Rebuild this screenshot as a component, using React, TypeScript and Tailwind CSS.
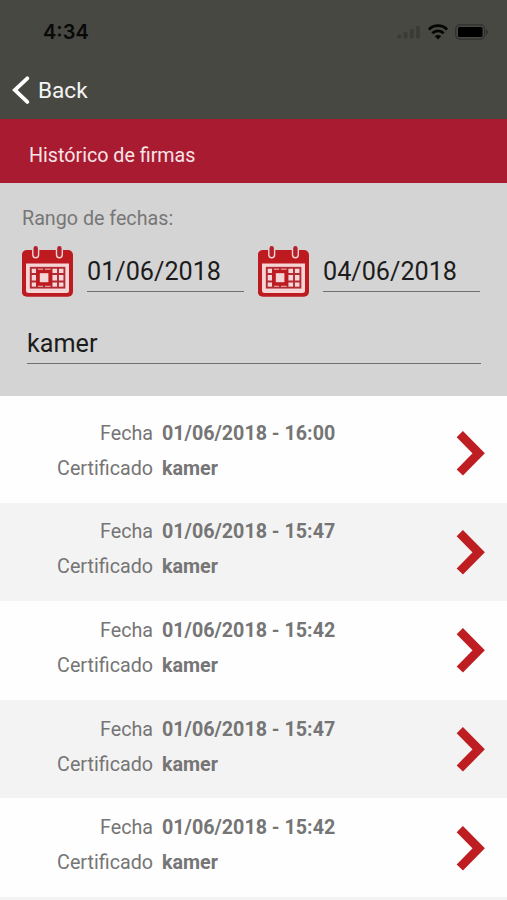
import React from 'react';

interface Signature {
  id: number;
  date: string;
  certificate: string;
}

const signatures: Signature[] = [
  { id: 1, date: '01/06/2018 - 16:00', certificate: 'kamer' },
  { id: 2, date: '01/06/2018 - 15:47', certificate: 'kamer' },
  { id: 3, date: '01/06/2018 - 15:42', certificate: 'kamer' },
  { id: 4, date: '01/06/2018 - 15:47', certificate: 'kamer' },
  { id: 5, date: '01/06/2018 - 15:42', certificate: 'kamer' },
];

// ================= ICONS =================
const SignalIcon = () => (
  <svg width="24" height="16" viewBox="0 0 24 16" fill="#3a3b36">
    <rect x="0.5" y="10.5" width="3.8" height="4" rx="1" />
    <rect x="6.7" y="8" width="3.8" height="6.5" rx="1" />
    <rect x="12.9" y="5" width="3.8" height="9.5" rx="1" />
    <rect x="19" y="2" width="3.8" height="12.5" rx="1" />
  </svg>
);

const WifiIcon = () => (
  <svg width="20" height="16" viewBox="0 0 20 16" fill="none" stroke="#050505" strokeWidth="2.8">
    <path d="M0.9 5.6C6 0.4 14 0.4 19.1 5.6" />
    <path d="M4.3 9.2C7.5 6 12.5 6 15.7 9.2" />
    <path d="M10 15.6L6.8 12.2C8.6 10.5 11.4 10.5 13.2 12.2Z" fill="#050505" stroke="none" />
  </svg>
);

const BatteryIcon = () => (
  <svg width="34" height="16" viewBox="0 0 34 16">
    <rect x="0.7" y="0.9" width="29" height="14.2" rx="4" fill="none" stroke="#2f302c" strokeWidth="1.2" />
    <rect x="3" y="3" width="24.5" height="10" rx="1.5" fill="#000" />
    <path d="M31 5.2C33.4 6 33.4 10 31 10.8Z" fill="#2f302c" />
  </svg>
);

const CalendarIcon = () => (
  <svg width="52" height="52" viewBox="0 0 52 52" className="shrink-0">
    <rect x="-0.2" y="4" width="51.2" height="46.8" rx="5" fill="#be1b20" />
    <path d="M4 17.5H47V44.5Q47 47 44.5 47H6.5Q4 47 4 44.5Z" fill="#f5d5d5" />
    <g fill="none" stroke="#b32a33" strokeWidth="1.9">
      <rect x="8.8" y="21.8" width="33.6" height="19.8" />
      <path d="M15 22V42M29.5 22V42M36 22V42M22 22V25M22 37V42" />
      <path d="M8.6 28H43M8.6 35.5H43" />
      <rect x="16" y="25.4" width="12.2" height="12.6" fill="#f5d5d5" stroke="#be1b20" strokeWidth="3.6" />
    </g>
    <path d="M13.7 2.5V8.8M37.4 2.5V8.8" stroke="#f5d5d5" strokeWidth="7.2" strokeLinecap="round" />
    <path d="M10 -1H17.5V4H10zM33.7 -1H41.2V4H33.7z" fill="#d4d4d4" />
    <path d="M13.7 2.3V8.8M37.4 2.3V8.8" stroke="#b5202a" strokeWidth="4.4" strokeLinecap="round" />
  </svg>
);

const ChevronIcon = () => (
  <svg width="30" height="46" viewBox="0 0 30 46" fill="none" stroke="#be1e22" strokeWidth="8.8">
    <path d="M3.8 4.1L22.7 23.3L3.8 42.5" />
  </svg>
);

// ================= DATE FIELD =================
const DateField = ({ value }: { value: string }) => (
  <div className="flex">
    <CalendarIcon />
    <div className="ml-[13px] h-[46px] w-[157px] border-b border-[#707070] pt-1.5 text-[25.2px] leading-10 text-[#1c1c1c]">
      {value}
    </div>
  </div>
);

// ================= LIST ROW =================
const SignatureRow = ({ item }: { item: Signature }) => (
  <div className="flex h-[98.6px] items-center bg-[#fefefe] pr-[21px] even:bg-[#f3f3f3]">
    <div className="grid grow grid-cols-[153px_1fr] gap-x-[9px] pb-[5px] text-[19.7px] leading-[35px] text-[#757575]">
      <span className="text-right">Fecha</span>
      <span className="font-bold">{item.date}</span>
      <span className="text-right">Certificado</span>
      <span className="font-bold">{item.certificate}</span>
    </div>
    <ChevronIcon />
  </div>
);

const App = () => {
  return (
    <div className="flex h-[900px] w-[507px] flex-col overflow-hidden bg-[#f3f3f3] font-['Roboto',sans-serif]">
      {/* STATUS BAR + NAVIGATION */}
      <header className="h-[119px] shrink-0 bg-[#474842]">
        <div className="flex h-16 items-center justify-between pr-[18px] pl-[43px]">
          <span className="font-['Inter',sans-serif] text-[20px] font-semibold text-[#090909]">4:34</span>
          <div className="flex items-center gap-[7px]">
            <SignalIcon />
            <WifiIcon />
            <BatteryIcon />
          </div>
        </div>
        <button className="flex h-[52px] items-center pl-3 text-[22.6px] text-[#f4f4f4]">
          <svg width="18" height="28" viewBox="0 0 18 28" fill="none" stroke="#fff" strokeWidth="3.8" strokeLinecap="round">
            <path d="M15.3 2.3L2.8 14L15.3 25.9" />
          </svg>
          <span className="ml-2 pt-0.5">Back</span>
        </button>
      </header>

      {/* TITLE */}
      <div className="flex h-[63.5px] shrink-0 items-center bg-[#a91b30] pt-2.5 pl-[29px] text-[19.7px] text-[#f8e4e7]">
        <h1>Histórico de firmas</h1>
      </div>

      {/* FILTERS */}
      <section className="h-[213.5px] shrink-0 bg-[#d4d4d4] px-[22px] pt-[21px]">
        <p className="h-[42px] text-[19.7px] leading-[30px] text-[#777]">Rango de fechas:</p>
        <div className="flex gap-[14px]">
          <DateField value="01/06/2018" />
          <DateField value="04/06/2018" />
        </div>
        <div className="mx-[5px] mt-[26px] h-[40px] w-[454px] border-b border-[#707070] text-[25.2px] leading-[40px] text-[#1c1c1c]">
          kamer
        </div>
      </section>

      {/* LIST */}
      <main className="shrink-0 bg-[#fefefe] pt-2">
        {signatures.map((item) => (
          <SignatureRow key={item.id} item={item} />
        ))}
      </main>
    </div>
  );
};

export default App;
